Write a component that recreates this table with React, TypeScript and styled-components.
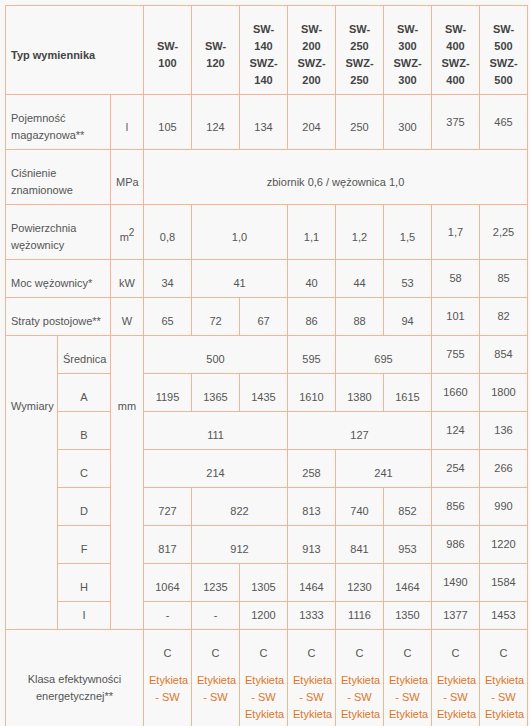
import React from "react";
import styled, { createGlobalStyle } from "styled-components";

const GlobalStyle = createGlobalStyle`
    body {
        margin: 0;
        background: #f8f8f8;
        font-family: "Liberation Sans", Arial, sans-serif;
    }
`;

const Page = styled.div`
    padding: 5px 0 0 5px;
`;

const Table = styled.table`
    width: 523px;
    table-layout: fixed;
    border-collapse: collapse;
    color: #555;
    font-size: 11px;
    line-height: 17px;
`;

const Col = styled.col<{ $w: number }>`
    width: ${(p) => p.$w}px;
`;

const Cell = styled.td<{ $align?: "left" | "center"; $plain?: boolean; $top?: boolean }>`
    border: 1px solid #f5b495;
    padding: ${(p) => (p.$plain ? "5px" : "15px 5px 5px")};
    text-align: ${(p) => p.$align ?? "center"};
    vertical-align: ${(p) => (p.$top ? "top" : "middle")};
`;

const HeadCell = styled(Cell).attrs({ as: "th" })`
    font-weight: bold;
    color: #444;
`;

const GroupCell = styled(Cell)`
    vertical-align: top;
    padding-top: 62px;
`;

const Sup = styled.sup`
    font-size: 10px;
    line-height: 0;
`;

const Labels = styled.div`
    margin-top: 10px;
`;

const LabelLink = styled.a`
    display: block;
    color: #e2741f;
    text-decoration: none;
`;

type Value = string | [string, number];

const models = [
    "SW-100",
    "SW-120",
    "SW-140 SWZ-140",
    "SW-200 SWZ-200",
    "SW-250 SWZ-250",
    "SW-300 SWZ-300",
    "SW-400 SWZ-400",
    "SW-500 SWZ-500",
];

const specs: { label: string; unit: React.ReactNode; values: Value[] }[] = [
    { label: "Pojemność magazynowa**", unit: "l", values: ["105", "124", "134", "204", "250", "300", "375", "465"] },
    { label: "Ciśnienie znamionowe", unit: "MPa", values: [["zbiornik 0,6 / wężownica 1,0", 8]] },
    { label: "Powierzchnia wężownicy", unit: <>m<Sup>2</Sup></>, values: ["0,8", ["1,0", 2], "1,1", "1,2", "1,5", "1,7", "2,25"] },
    { label: "Moc wężownicy*", unit: "kW", values: ["34", ["41", 2], "40", "44", "53", "58", "85"] },
    { label: "Straty postojowe**", unit: "W", values: ["65", "72", "67", "86", "88", "94", "101", "82"] },
];

const dimensions: { name: string; values: Value[] }[] = [
    { name: "Średnica", values: [["500", 3], "595", ["695", 2], "755", "854"] },
    { name: "A", values: ["1195", "1365", "1435", "1610", "1380", "1615", "1660", "1800"] },
    { name: "B", values: [["111", 3], ["127", 3], "124", "136"] },
    { name: "C", values: [["214", 3], "258", ["241", 2], "254", "266"] },
    { name: "D", values: ["727", ["822", 2], "813", "740", "852", "856", "990"] },
    { name: "F", values: ["817", ["912", 2], "913", "841", "953", "986", "1220"] },
    { name: "H", values: ["1064", "1235", "1305", "1464", "1230", "1464", "1490", "1584"] },
    { name: "I", values: ["-", "-", "1200", "1333", "1116", "1350", "1377", "1453"] },
];

// header names break after each hyphen like the original narrow columns do
const breakable = (text: string) =>
    text.split("-").map((part, i, all) => (
        <React.Fragment key={i}>
            {part}
            {i < all.length - 1 && <>-<wbr /></>}
        </React.Fragment>
    ));

const renderValues = (values: Value[], allPlain = false) => {
    let col = 0;
    return values.map((v, i) => {
        const [text, span] = typeof v === "string" ? [v, 1] : v;
        const plain = allPlain || col >= 6;
        col += span;
        return (
            <Cell key={i} colSpan={span} $plain={plain}>
                {text}
            </Cell>
        );
    });
};

export default function App() {
    return (
        <>
            <GlobalStyle />
            <Page>
                <Table>
                    <colgroup>
                        <Col $w={52} />
                        <Col $w={53} />
                        <Col $w={33} />
                        {models.map((m) => (
                            <Col key={m} $w={48} />
                        ))}
                    </colgroup>
                    <tbody>
                        <tr>
                            <HeadCell colSpan={3} $align="left">Typ wymiennika</HeadCell>
                            {models.map((m) => (
                                <HeadCell key={m}>{breakable(m)}</HeadCell>
                            ))}
                        </tr>

                        {specs.map((row) => (
                            <tr key={row.label}>
                                <Cell colSpan={2} $align="left">{row.label}</Cell>
                                <Cell>{row.unit}</Cell>
                                {renderValues(row.values)}
                            </tr>
                        ))}

                        {dimensions.map((row, i) => (
                            <tr key={row.name}>
                                {i === 0 && (
                                    <GroupCell rowSpan={dimensions.length} $align="left">Wymiary</GroupCell>
                                )}
                                <Cell $plain={row.name === "I"}>{row.name}</Cell>
                                {i === 0 && <GroupCell rowSpan={dimensions.length}>mm</GroupCell>}
                                {renderValues(row.values, row.name === "I")}
                            </tr>
                        ))}

                        <tr>
                            <Cell colSpan={3} $plain>Klasa efektywności energetycznej**</Cell>
                            {models.map((m, i) => (
                                <Cell key={m} $top>
                                    C
                                    <Labels>
                                        <LabelLink href="#">Etykieta - SW</LabelLink>
                                        {i >= 2 && <LabelLink href="#">Etykieta - SWZ</LabelLink>}
                                    </Labels>
                                </Cell>
                            ))}
                        </tr>
                    </tbody>
                </Table>
            </Page>
        </>
    );
}
